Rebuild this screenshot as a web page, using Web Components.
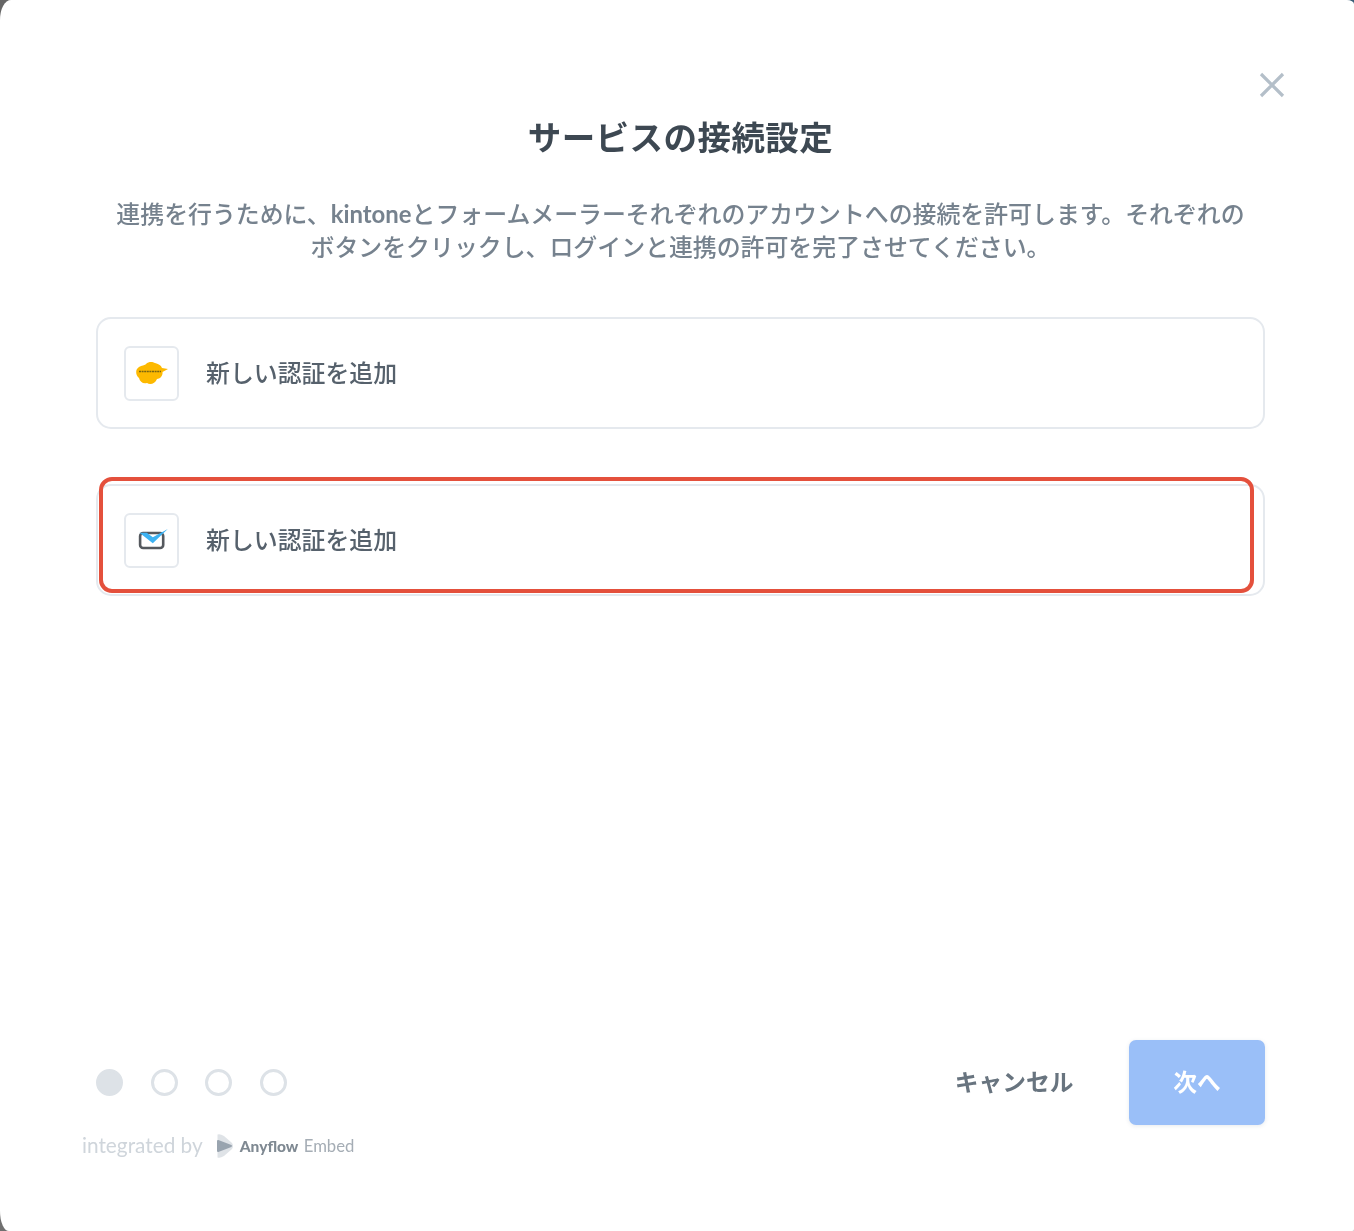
<!DOCTYPE html>
<html lang="ja">
<head>
<meta charset="utf-8">
<title>サービスの接続設定</title>
<style>
  html, body { margin: 0; height: 100%; }
  body {
    background:
      linear-gradient(to right, #666 50%, #3a5f78 50%) top / 100% 50% no-repeat,
      linear-gradient(to right, #707070 50%, #c8c8c8 50%) bottom / 100% 50% no-repeat;
    overflow: hidden;
    font-family: Lato, "Noto Sans CJK JP", sans-serif;
  }
</style>
</head>
<body>
<connect-modal>
  <auth-row><logo-kintone slot="icon"></logo-kintone>新しい認証を追加</auth-row>
  <auth-row highlighted><logo-mail slot="icon"></logo-mail>新しい認証を追加</auth-row>
</connect-modal>

<script>
class ConnectModal extends HTMLElement {
    constructor() {
        super();
        this.attachShadow({ mode: 'open' });
        this.shadowRoot.innerHTML = `
            <style>
                :host {
                    display: flex;
                    flex-direction: column;
                    box-sizing: border-box;
                    height: 1231px;
                    padding: 0 89px 0 96px;
                    background: #fff;
                    border-radius: 11px 7px 2px 9px / 20px 4px 2px 20px;
                    filter: blur(0.7px);
                }
                .close {
                    align-self: flex-end;
                    display: block;
                    width: 28px;
                    height: 28px;
                    margin: 71px -21px 0 0;
                }
                h1 {
                    margin: 13px 0 0;
                    height: 50px;
                    line-height: 50px;
                    font-size: 33.5px;
                    letter-spacing: 0.45px;
                    font-weight: 700;
                    text-align: center;
                    color: #3d4852;
                }
                p {
                    margin: 35px 0 0;
                    font-size: 23.9px;
                    line-height: 33px;
                    font-weight: 500;
                    text-align: center;
                    color: #76828e;
                }
                p span { display: block; }
                p b { font-weight: 700; }
                .rows {
                    display: flex;
                    flex-direction: column;
                    gap: 55px;
                    margin-top: 54px;
                    flex: 1;
                }
                footer {
                    display: flex;
                    align-items: center;
                    justify-content: space-between;
                    height: 85px;
                }
                .actions { display: flex; align-items: center; gap: 55.5px; }
                .cancel {
                    padding-bottom: 4px;
                    font-size: 23.75px;
                    font-weight: 700;
                    color: #68747f;
                }
                .next {
                    display: flex;
                    align-items: center;
                    justify-content: center;
                    box-sizing: border-box;
                    width: 136px;
                    height: 85px;
                    padding-bottom: 4px;
                    border-radius: 7px;
                    background: #9abff8;
                    color: #fff;
                    font-size: 23.75px;
                    font-weight: 700;
                    box-shadow: 0 1px 4px rgba(60, 80, 110, 0.12);
                }
                .credit {
                    display: flex;
                    align-items: center;
                    gap: 13px;
                    margin: 3px 0 69px -14px;
                    height: 34px;
                    color: #cfd5db;
                    font-size: 20.8px;
                }
                .credit span { padding-bottom: 2px; }
            </style>
            <svg class="close" viewBox="0 0 28 28" fill="none" stroke="#b4bfc9" stroke-width="3.2">
                <path d="M3 3L25 25M25 3L3 25"/>
            </svg>
            <h1>サービスの接続設定</h1>
            <p>
                <span>連携を行うために、<b>kintone</b>とフォームメーラーそれぞれのアカウントへの接続を許可します。それぞれの</span>
                <span>ボタンをクリックし、ログインと連携の許可を完了させてください。</span>
            </p>
            <div class="rows"><slot></slot></div>
            <footer>
                <step-dots count="4" current="0"></step-dots>
                <div class="actions">
                    <span class="cancel">キャンセル</span>
                    <span class="next">次へ</span>
                </div>
            </footer>
            <div class="credit">
                <span>integrated by</span>
                <anyflow-badge></anyflow-badge>
            </div>
        `;
    }
}

class AuthRow extends HTMLElement {
    constructor() {
        super();
        this.attachShadow({ mode: 'open' });
        this.shadowRoot.innerHTML = `
            <style>
                :host {
                    display: flex;
                    align-items: center;
                    gap: 27px;
                    position: relative;
                    box-sizing: border-box;
                    height: 112px;
                    padding: 0 26px;
                    border: 2px solid #e5e9ee;
                    border-radius: 15px;
                    background: #fff;
                    font-size: 23.9px;
                    font-weight: 500;
                    color: #56616c;
                }
                .icon {
                    display: flex;
                    align-items: center;
                    justify-content: center;
                    box-sizing: border-box;
                    width: 55px;
                    height: 55px;
                    border: 2px solid #e5e9ee;
                    border-radius: 6px;
                }
                .label { padding-bottom: 4px; }
                .mark {
                    display: none;
                    position: absolute;
                    left: 1px;
                    right: 9px;
                    top: -9px;
                    bottom: 1px;
                    border: 4px solid #e4503c;
                    border-radius: 13px;
                }
                :host([highlighted]) .mark { display: block; }
            </style>
            <span class="icon"><slot name="icon"></slot></span>
            <span class="label"><slot></slot></span>
            <span class="mark"></span>
        `;
    }
}

class StepDots extends HTMLElement {
    constructor() {
        super();
        this.attachShadow({ mode: 'open' });
        const count = Number(this.getAttribute('count'));
        const current = Number(this.getAttribute('current'));
        let dots = '';
        for (let i = 0; i < count; i++) {
            dots += `<i class="${i === current ? 'on' : ''}"></i>`;
        }
        this.shadowRoot.innerHTML = `
            <style>
                :host { display: flex; gap: 27.5px; }
                i {
                    box-sizing: border-box;
                    width: 27px;
                    height: 27px;
                    border: 3px solid #dde2e7;
                    border-radius: 50%;
                }
                i.on { background: #dde2e7; }
            </style>
            ${dots}
        `;
    }
}

class LogoKintone extends HTMLElement {
    constructor() {
        super();
        this.attachShadow({ mode: 'open' });
        this.shadowRoot.innerHTML = `
            <style>
                :host { display: block; width: 32px; height: 26px; }
                svg { display: block; }
            </style>
            <svg width="32" height="26" viewBox="0 0 32 26">
                <path fill="#fdb900" d="M1 9C4 5 8 6 10 4C13 1 17 2 19 3C22 4 25 5 26 8L32 9L26.500 12C27 16 24 19 21 19C19 24 14 25 11 23C7 24 4 22 3 18C0 16 -.5 11 1 9Z"/>
                <path stroke="#7a6510" stroke-width="1.6" stroke-dasharray="2 .6" d="M3 11.500H25"/>
            </svg>
        `;
    }
}

class LogoMail extends HTMLElement {
    constructor() {
        super();
        this.attachShadow({ mode: 'open' });
        this.shadowRoot.innerHTML = `
            <style>
                :host { display: block; width: 33px; height: 24px; }
                svg { display: block; }
            </style>
            <svg width="33" height="24" viewBox="0 0 33 24" fill="none">
                <rect x="5.100" y="5" width="23.100" height="15" rx="3" stroke="#55595e" stroke-width="2.600"/>
                <path fill="#3db2f2" d="M4.500 4.700H11.800L17.800 9.300L32.800 1L17.800 15.300Z"/>
            </svg>
        `;
    }
}

class AnyflowBadge extends HTMLElement {
    constructor() {
        super();
        this.attachShadow({ mode: 'open' });
        this.shadowRoot.innerHTML = `
            <style>
                :host {
                    display: flex;
                    align-items: center;
                    gap: 6px;
                    white-space: nowrap;
                }
                svg { display: block; margin-top: 2px; }
                div { padding-bottom: 3px; }
                b { font-size: 15.5px; font-weight: 900; color: #7f8992; }
                span { font-size: 16.7px; color: #a5adb5; }
            </style>
            <svg width="18" height="26" viewBox="0 0 18 26">
                <path fill="#dfe3e7" d="M1.500 1.500Q4 .5 8 3L16 10Q18 13 16 16L8 23Q4 25.500 1.500 24.500Z"/>
                <path fill="#99a4af" stroke="#99a4af" stroke-width="2" stroke-linejoin="round" d="M2 8L15 13L2 18Z"/>
            </svg>
            <div><b>Anyflow</b> <span>Embed</span></div>
        `;
    }
}

customElements.define('connect-modal', ConnectModal);
customElements.define('auth-row', AuthRow);
customElements.define('step-dots', StepDots);
customElements.define('logo-kintone', LogoKintone);
customElements.define('logo-mail', LogoMail);
customElements.define('anyflow-badge', AnyflowBadge);
</script>
</body>
</html>
